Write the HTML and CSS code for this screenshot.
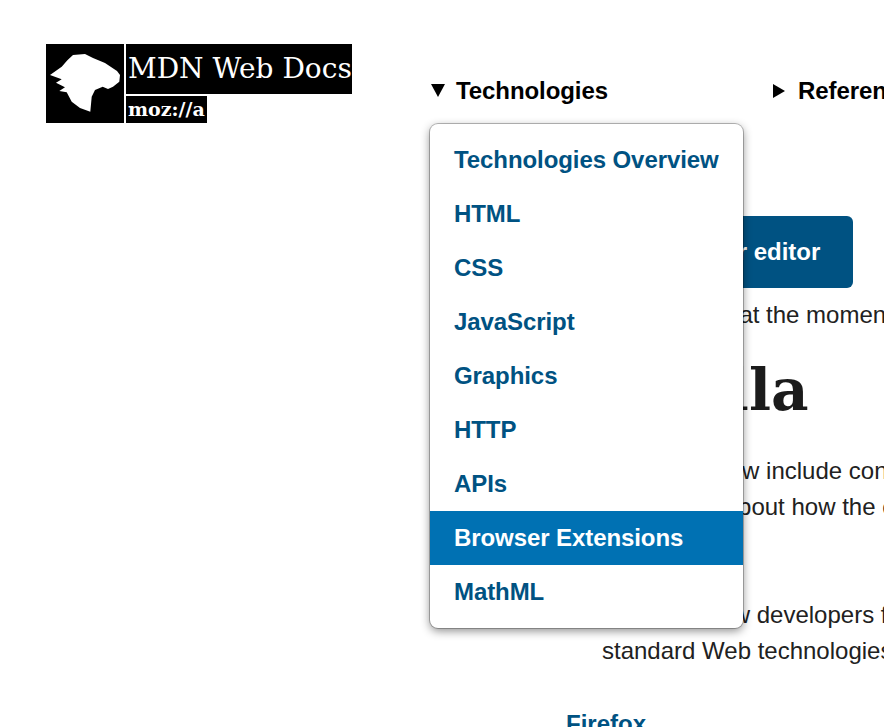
FILE: index.html
```html
<!DOCTYPE html>
<html lang="en">
<head>
    <meta charset="UTF-8">
    <meta name="viewport" content="width=device-width, initial-scale=1.0">
    <title>MDN Web Docs</title>
    <link rel="stylesheet" href="styles.css">
</head>
<body>
    <!-- Logo and top navigation -->
    <header class="topo">
        <a class="logo" href="#">
            <span class="logo-icone">
                <svg width="78" height="79" viewBox="46 44 78 79">
                    <path fill="#fff" d="M50 75 L61.700 66.700 Q67 60 73 55 L85 54 L93 58 L105 63 L117 71 L120 75 L119.300 81.700 L113 86.700 L108 89 L102.700 86.700 L95 90 L91.700 96.700 L90.300 111.700 L80 108 L71.700 101.700 L66.700 92.300 L59.300 91 L65 87.300 L56 82.700 L61.700 79.300 Z"/>
                </svg>
            </span>
            <span class="logo-textos">
                <span class="logo-nome">MDN Web Docs</span>
                <span class="logo-moz">moz://a</span>
            </span>
        </a>

        <nav class="menu-topo">
            <div class="menu-item">
                <button class="menu-titulo">
                    <svg class="seta" width="16" height="14" viewBox="0 0 16 14"><polygon points="1,0 15,0 8,13"/></svg>
                    Technologies
                </button>
                <!-- Dropdown aberto -->
                <ul class="dropdown">
                    <li><a href="#">Technologies Overview</a></li>
                    <li><a href="#">HTML</a></li>
                    <li><a href="#">CSS</a></li>
                    <li><a href="#">JavaScript</a></li>
                    <li><a href="#">Graphics</a></li>
                    <li><a href="#">HTTP</a></li>
                    <li><a href="#">APIs</a></li>
                    <li><a class="ativo" href="#">Browser Extensions</a></li>
                    <li><a href="#">MathML</a></li>
                </ul>
            </div>
            <div class="menu-item">
                <button class="menu-titulo">
                    <svg class="seta" width="16" height="14" viewBox="0 0 16 14"><polygon points="1,0 13,7 1,14"/></svg>
                    References
                </button>
            </div>
        </nav>
    </header>

    <!-- Page content, partly covered by the dropdown -->
    <main class="conteudo">
        <div class="area-botao">
            <a class="botao" href="#">Open your editor</a>
        </div>
        <p class="texto">Editor is idle at the moment</p>
        <h1 class="titulo">Mozilla</h1>
        <p class="texto">The notes now include content<br>and writing about how the code works</p>
        <p class="texto bloco">The tips show developers for<br>standard Web technologies</p>
        <a class="link" href="#">Firefox</a>
    </main>
</body>
</html>
```

FILE: styles.css
```css
* {
  margin: 0;
  padding: 0;
  box-sizing: border-box;
}

html, body {
  height: 727px;
  overflow: hidden;
}

body {
  background-color: white;
  color: #212121;
  font-family: 'Liberation Sans', Arial, sans-serif;
  font-size: 24px;
  line-height: 36px;
  white-space: nowrap;
}

a {
  text-decoration: none;
}

/* Header */
.topo {
  display: flex;
  height: 216px;
  padding: 44px 0 0 46px;
}

.logo {
  display: flex;
  gap: 2px;
  height: 79px;
  width: 306px;
  flex-shrink: 0;
}

.logo-icone {
  display: block;
  width: 78px;
  height: 79px;
  background-color: black;
}

.logo-icone svg {
  display: block;
}

.logo-textos {
  display: flex;
  flex-direction: column;
  align-items: flex-start;
  gap: 2px;
}

.logo-nome {
  width: 226px;
  height: 50px;
  background-color: black;
  color: white;
  font-family: 'DejaVu Serif', serif;
  font-size: 28px;
  line-height: 50px;
  padding-left: 2px;
}

.logo-moz {
  width: 81px;
  height: 27px;
  background-color: black;
  color: white;
  font-family: 'DejaVu Serif', serif;
  font-weight: bold;
  font-size: 19px;
  line-height: 27px;
  padding-left: 2px;
}

.menu-topo {
  display: flex;
  margin-left: 78px;
}

.menu-item {
  position: relative;
  width: 342px;
  flex-shrink: 0;
}

.menu-titulo {
  display: flex;
  align-items: center;
  gap: 10px;
  height: 36px;
  margin-top: 29px;
  border: none;
  background: none;
  color: black;
  font-family: inherit;
  font-size: 24px;
  font-weight: bold;
  letter-spacing: -0.08px;
}

.seta {
  display: block;
  fill: black;
}

.dropdown {
  position: absolute;
  top: 80px;
  left: 0;
  z-index: 10;
  width: 313px;
  padding: 9px 0;
  list-style: none;
  background-color: white;
  border-radius: 8px;
  box-shadow: 0 0 0 1px rgba(0, 0, 0, 0.25), 0 3px 10px rgba(0, 0, 0, 0.45);
}

.dropdown a {
  display: block;
  height: 54px;
  padding-left: 24px;
  color: #005282;
  font-weight: bold;
  letter-spacing: -0.08px;
  line-height: 54px;
}

.dropdown a.ativo {
  background-color: #0071b3;
  color: white;
}

/* Content */
.conteudo {
  padding-left: 566px;
}

.area-botao {
  padding-left: 28px;
  margin-bottom: 9px;
}

.botao {
  display: inline-block;
  height: 72px;
  padding: 0 33px;
  background-color: #005282;
  border-radius: 6px;
  color: white;
  font-weight: bold;
  line-height: 72px;
}

.texto {
  padding-left: 36px;
}

.titulo {
  padding: 21px 0 27px 3px;
  color: #1b1b1b;
  font-family: 'DejaVu Serif', serif;
  font-size: 58px;
  font-weight: bold;
  line-height: 72px;
}

.bloco {
  margin-top: 72px;
  margin-bottom: 37px;
}

.link {
  color: #005282;
  font-weight: bold;
}
```
